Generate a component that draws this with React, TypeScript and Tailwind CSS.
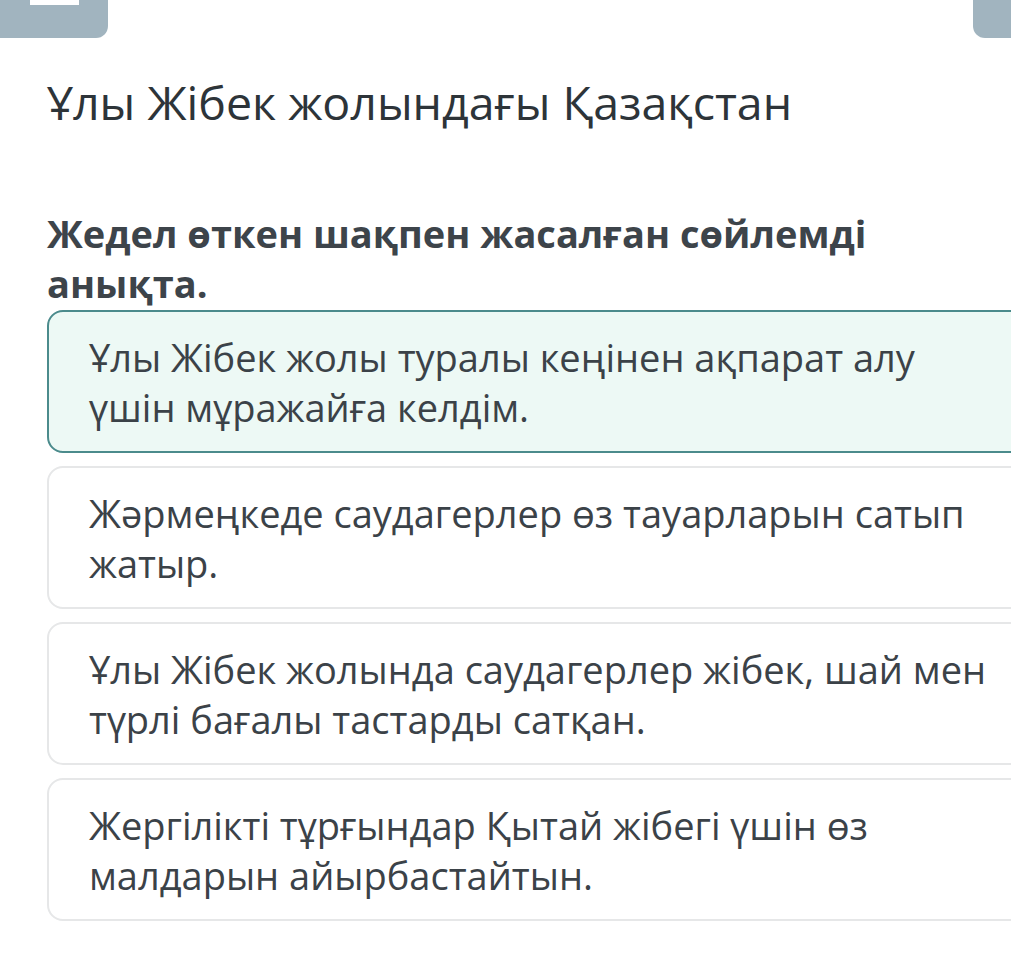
const options = [
    'Ұлы Жібек жолы туралы кеңінен ақпарат алу үшін мұражайға келдім.',
    'Жәрмеңкеде саудагерлер өз тауарларын сатып жатыр.',
    'Ұлы Жібек жолында саудагерлер жібек, шай мен түрлі бағалы тастарды сатқан.',
    'Жергілікті тұрғындар Қытай жібегі үшін өз малдарын айырбастайтын.',
];

export default function App() {
    return (
        <div className="relative h-[954px] w-[1011px] overflow-hidden bg-white font-['Open_Sans',sans-serif] text-[#343b41]">
            <div className="flex justify-between">
                <div className="relative h-[38px] w-[108px] rounded-br-[12px] bg-[#a1b4bf]">
                    <div className="absolute left-[30px] top-0 h-[5px] w-[49px] bg-white" />
                </div>
                <div className="h-[38px] w-[38px] rounded-bl-[12px] bg-[#a1b4bf]" />
            </div>

            <div className="pl-[47px]">
                <h1 className="mt-[33px] text-[46.5px] leading-[62px] font-normal text-[#2d3439]">Ұлы Жібек жолындағы Қазақстан</h1>

                <p className="mt-[75px] w-[880px] text-[38px] leading-[50px] font-bold text-[#3d444a]">
                    Жедел өткен шақпен жасалған сөйлемді анықта.
                </p>

                <div className="mt-[2px] flex w-[1020px] flex-col gap-[13px]">
                    {options.map((t, i) => (
                        <div
                            key={i}
                            className={`flex h-[143px] items-center rounded-[16px] border-2 pl-[40px] ${i === 0 ? 'border-[#4b8b8c] bg-[#edf9f5]' : 'border-[#e6e7e8] bg-white'}`}
                        >
                            <div className="w-[920px] text-[38px] leading-[50px] text-[#3b4248]">{t}</div>
                        </div>
                    ))}
                </div>
            </div>
        </div>
    );
}
